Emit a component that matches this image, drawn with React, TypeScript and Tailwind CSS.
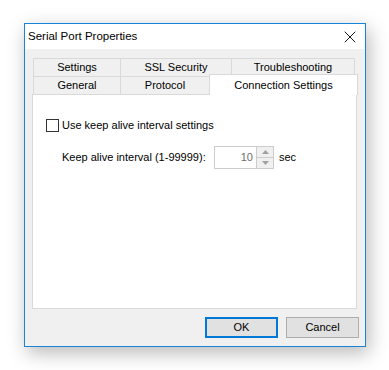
import { X } from "lucide-react";

// Tab strip: two rows, last tab of second row is the selected one
const topRow = [
  { label: "Settings", w: "w-[87px]" },
  { label: "SSL Security", w: "w-[111px]" },
  { label: "Troubleshooting", w: "w-[124px] border-r" },
];

const bottomRow = [
  { label: "General", w: "w-[87px]" },
  { label: "Protocol", w: "w-[89px]" },
];

function Tab({ label, w }: { label: string; w: string }) {
  return (
    <div
      className={`${w} h-[18px] flex items-center justify-center border-t border-l border-[#d9d9d9] bg-[#f0f0f0] text-black`}
    >
      {label}
    </div>
  );
}

function SpinBox() {
  return (
    <div className="flex h-[23px] w-[60px] shrink-0 border border-[#cccccc] bg-white">
      <div className="flex flex-1 items-center justify-end pr-[3px] text-[#6d6d6d]">10</div>
      <div className="flex w-[17px] flex-col border-l border-[#cccccc]">
        <div className="flex flex-1 items-center justify-center bg-[#f0f0f0] border-b border-[#cccccc]">
          <svg width="7" height="4" viewBox="0 0 7 4">
            <path d="M0 4 L3.5 0 L7 4 Z" fill="#a0a0a0" />
          </svg>
        </div>
        <div className="flex flex-1 items-center justify-center bg-[#f0f0f0]">
          <svg width="7" height="4" viewBox="0 0 7 4">
            <path d="M0 0 L3.5 4 L7 0 Z" fill="#a0a0a0" />
          </svg>
        </div>
      </div>
    </div>
  );
}

export default function App() {
  return (
    <div
      className="w-[389px] h-[370px] bg-white pl-[24px] pt-[23px] text-[11px] text-black"
      style={{ fontFamily: "'Liberation Sans', Arial, sans-serif" }}
    >
      <div className="flex h-[324px] w-[342px] flex-col border border-[#1883d7] bg-[#f0f0f0] shadow-[3px_6px_18px_rgba(0,0,0,0.28)]">
        {/* Title bar */}
        <div className="flex h-[25px] items-center justify-between bg-white pl-[3px] pr-[5px]">
          <span className="text-[11.5px]">Serial Port Properties</span>
          <X className="h-[20px] w-[20px] text-black" strokeWidth={1.1} />
        </div>

        {/* Body */}
        <div className="flex flex-1 flex-col pl-[7px] pt-[9px]">
          <div className="flex pl-[1px]">
            {topRow.map((t) => (
              <Tab key={t.label} label={t.label} w={t.w} />
            ))}
          </div>
          <div className="relative z-10 flex h-[18px] items-start pl-[1px]">
            {bottomRow.map((t) => (
              <Tab key={t.label} label={t.label} w={t.w} />
            ))}
            <div className="-mt-[2px] flex h-[21px] w-[149px] items-start justify-center border-l border-r border-t border-[#d9d9d9] bg-white pt-[2px]">
              Connection Settings
            </div>
          </div>

          {/* Tab page */}
          <div className="h-[215px] w-[325px] border border-[#d9d9d9] bg-white pl-[13px] pt-[22px]">
            <label className="flex items-center gap-[3px]">
              <span className="h-[13px] w-[13px] border border-[#333333] bg-white" />
              <span>Use keep alive interval settings</span>
            </label>
            <div className="mt-[12px] flex items-center pl-[16px]">
              <span className="w-[152px] shrink-0 whitespace-nowrap">Keep alive interval (1-99999):</span>
              <SpinBox />
              <span className="ml-[5px]">sec</span>
            </div>
          </div>

          {/* Buttons */}
          <div className="mt-[8px] flex justify-end gap-[8px] pr-[6px]">
            <button className="h-[21px] w-[73px] border-2 border-[#0078d7] bg-[#e1e1e1]">OK</button>
            <button className="h-[21px] w-[73px] border border-[#adadad] bg-[#e1e1e1]">Cancel</button>
          </div>
        </div>
      </div>
    </div>
  );
}
